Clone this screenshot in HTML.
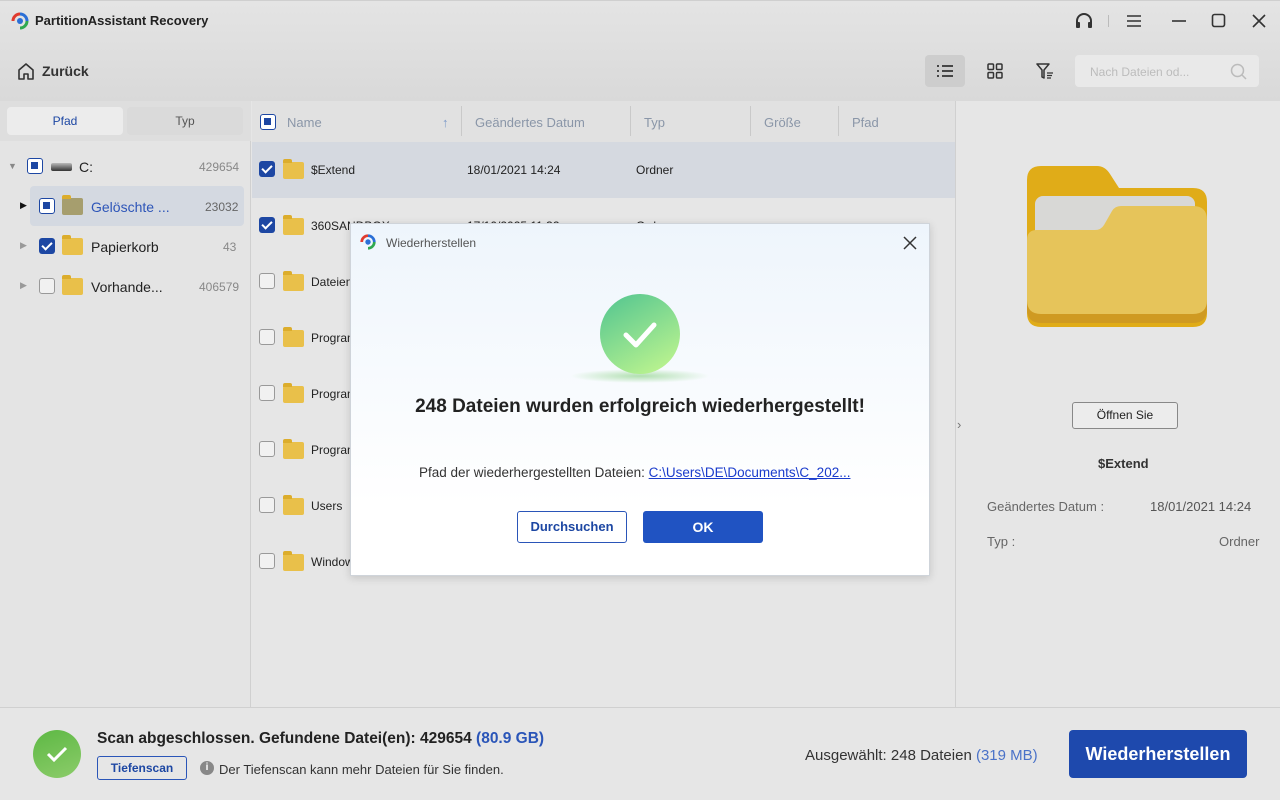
<!DOCTYPE html>
<html><head><meta charset="utf-8"><style>
*{box-sizing:border-box;margin:0;padding:0}
body{width:1280px;height:800px;overflow:hidden;background:#e6e6e6;font-family:"Liberation Sans",sans-serif;color:#222;position:relative;font-size:13px}
.abs{position:absolute}
.top{left:0;top:0;width:1280px;height:101px;background:linear-gradient(#e4e4e4,#d9d9d9);border-top:1px solid #cfcfcf}
.cb{position:absolute;width:16px;height:16px;border-radius:3px}
.cb.on{background:#1d47a3}
.cb.on::after{content:"";position:absolute;left:5px;top:2px;width:4px;height:8px;border:solid #fff;border-width:0 2px 2px 0;transform:rotate(45deg)}
.cb.part{border:1.5px solid #1d47a3;background:#fff}
.cb.part::after{content:"";position:absolute;left:3px;top:3px;width:7px;height:7px;background:#1d47a3}
.cb.off{border:1.3px solid #999;background:#f1f1f1}
.fold{position:absolute;width:21px;height:17px;background:#e9c04a;border-radius:2px}
.fold::before{content:"";position:absolute;left:0;top:-3px;width:9px;height:4px;background:#dcad2c;border-radius:2px 2px 0 0}
.row{position:absolute;left:252px;width:703px;height:56px}
.row span{position:absolute;top:21px;font-size:12px}
.hd{position:absolute;top:115px;font-size:13px;color:#8a96a8}
.sep{position:absolute;top:106px;width:1px;height:30px;background:#c9c9c9}
</style></head><body>
<div class="abs top"></div>
<svg class="abs" style="left:10px;top:11px" width="20" height="20" viewBox="0 0 20 20"><path d="M3 10a7 7 0 0 1 7-7" stroke="#e03b2f" stroke-width="3" fill="none"/><path d="M10 3a7 7 0 0 1 7 7" stroke="#2b6fd6" stroke-width="3" fill="none"/><path d="M17 10a7 7 0 0 1-7 7" stroke="#2fa84f" stroke-width="3" fill="none"/><circle cx="10" cy="10" r="3" fill="#2b6fd6"/></svg>
<div class="abs" style="left:35px;top:13px;font-size:13px;font-weight:bold;color:#222">PartitionAssistant Recovery</div>
<svg class="abs" style="left:1074px;top:12px" width="20" height="18" viewBox="0 0 20 18"><path d="M3 12V9a7 7 0 0 1 14 0v3" stroke="#333" stroke-width="2" fill="none"/><rect x="2" y="10" width="4" height="6" rx="1" fill="#333"/><rect x="14" y="10" width="4" height="6" rx="1" fill="#333"/></svg>
<div class="abs" style="left:1108px;top:15px;width:1px;height:12px;background:#bbb"></div>
<svg class="abs" style="left:1126px;top:14px" width="16" height="14"><path d="M1 2h14M1 7h14M1 12h14" stroke="#333" stroke-width="1.6"/></svg>
<svg class="abs" style="left:1171px;top:14px" width="16" height="14"><path d="M1 7h14" stroke="#333" stroke-width="1.6"/></svg>
<svg class="abs" style="left:1211px;top:13px" width="16" height="16"><rect x="1.5" y="1.5" width="12" height="12" rx="2" stroke="#333" stroke-width="1.6" fill="none"/></svg>
<svg class="abs" style="left:1251px;top:13px" width="16" height="16"><path d="M2 2l12 12M14 2L2 14" stroke="#333" stroke-width="1.6"/></svg>
<svg class="abs" style="left:16px;top:62px" width="20" height="18" viewBox="0 0 20 18"><path d="M3 17V8l7-6 7 6v9h-5v-5H8v5z" stroke="#333" stroke-width="1.6" fill="none" stroke-linejoin="round"/></svg>
<div class="abs" style="left:42px;top:63px;font-size:14px;font-weight:bold;color:#333">Zurück</div>
<div class="abs" style="left:925px;top:55px;width:40px;height:32px;background:#cdcdcd;border-radius:4px"></div>
<svg class="abs" style="left:936px;top:64px" width="18" height="14"><path d="M1 2h2M6 2h11M1 7h2M6 7h11M1 12h2M6 12h11" stroke="#333" stroke-width="1.8"/></svg>
<svg class="abs" style="left:987px;top:63px" width="16" height="16"><rect x="1" y="1" width="5.5" height="5.5" rx="1" stroke="#333" stroke-width="1.5" fill="none"/><rect x="9.5" y="1" width="5.5" height="5.5" rx="1" stroke="#333" stroke-width="1.5" fill="none"/><rect x="1" y="9.5" width="5.5" height="5.5" rx="1" stroke="#333" stroke-width="1.5" fill="none"/><rect x="9.5" y="9.5" width="5.5" height="5.5" rx="1" stroke="#333" stroke-width="1.5" fill="none"/></svg>
<svg class="abs" style="left:1036px;top:62px" width="18" height="18"><path d="M1 2h12l-5 6v8l-2-1V8z" stroke="#333" stroke-width="1.5" fill="none" stroke-linejoin="round"/><path d="M11 11h6M11 13.5h5M11 16h4" stroke="#333" stroke-width="1.3"/></svg>
<div class="abs" style="left:1075px;top:55px;width:184px;height:32px;background:#e9e9e9;border-radius:4px"></div>
<div class="abs" style="left:1090px;top:65px;font-size:12px;color:#bcbcbc">Nach Dateien od...</div>
<svg class="abs" style="left:1230px;top:63px" width="18" height="18"><circle cx="7.5" cy="7.5" r="6" stroke="#bbb" stroke-width="1.5" fill="none"/><path d="M12 12l4 4" stroke="#bbb" stroke-width="1.5"/></svg>
<div class="abs" style="left:0;top:101px;width:251px;height:607px;background:#e4e4e4;border-right:1px solid #d0d0d0"></div>
<div class="abs" style="left:0;top:101px;width:251px;height:40px;background:#dedede"></div>
<div class="abs" style="left:7px;top:107px;width:116px;height:28px;background:#ececec;border-radius:4px;text-align:center;line-height:28px;font-size:12px;color:#1d47a3">Pfad</div>
<div class="abs" style="left:127px;top:107px;width:116px;height:28px;background:#dadada;border-radius:4px;text-align:center;line-height:28px;font-size:12px;color:#555">Typ</div>
<div class="abs" style="left:8px;top:161px;font-size:9px;color:#888">▼</div>
<div class="cb part" style="left:27px;top:158px"></div>
<div class="abs" style="left:51px;top:163px;width:21px;height:8px;background:linear-gradient(#bbb,#333);border-radius:2px"></div>
<div class="abs" style="left:79px;top:159px;font-size:14px;color:#222">C:</div>
<div class="abs" style="left:199px;top:160px;font-size:12px;color:#888">429654</div>
<div class="abs" style="left:30px;top:186px;width:214px;height:40px;background:#d4d9e1;border-radius:4px"></div>
<div class="abs" style="left:20px;top:200px;font-size:9px;color:#111">▶</div>
<div class="cb part" style="left:39px;top:198px"></div>
<div class="fold" style="left:62px;top:198px;background:#a69e6e"></div>
<div class="abs" style="left:91px;top:199px;font-size:14px;color:#2d55b8">Gelöschte ...</div>
<div class="abs" style="left:205px;top:200px;font-size:12px;color:#666">23032</div>
<div class="abs" style="left:20px;top:240px;font-size:9px;color:#999">▶</div>
<div class="cb on" style="left:39px;top:238px"></div>
<div class="fold" style="left:62px;top:238px"></div>
<div class="abs" style="left:91px;top:239px;font-size:14px;color:#222">Papierkorb</div>
<div class="abs" style="left:223px;top:240px;font-size:12px;color:#888">43</div>
<div class="abs" style="left:20px;top:280px;font-size:9px;color:#999">▶</div>
<div class="cb off" style="left:39px;top:278px"></div>
<div class="fold" style="left:62px;top:278px"></div>
<div class="abs" style="left:91px;top:279px;font-size:14px;color:#222">Vorhande...</div>
<div class="abs" style="left:199px;top:280px;font-size:12px;color:#888">406579</div>
<div class="abs" style="left:252px;top:101px;width:703px;height:41px;background:#e1e1e1"></div>
<div class="cb part" style="left:260px;top:114px"></div>
<div class="hd" style="left:287px">Name</div>
<div class="hd" style="left:442px;color:#7d9ac8">↑</div>
<div class="sep" style="left:461px"></div>
<div class="hd" style="left:475px">Geändertes Datum</div>
<div class="sep" style="left:630px"></div>
<div class="hd" style="left:644px">Typ</div>
<div class="sep" style="left:750px"></div>
<div class="hd" style="left:764px">Größe</div>
<div class="sep" style="left:838px"></div>
<div class="hd" style="left:852px">Pfad</div>
<div class="row" style="top:142px;background:#d5d9e0"><div class="cb on" style="left:7px;top:19px"></div><div class="fold" style="left:31px;top:20px"></div><span style="left:59px">$Extend</span><span style="left:215px">18/01/2021 14:24</span><span style="left:384px">Ordner</span></div>
<div class="row" style="top:198px"><div class="cb on" style="left:7px;top:19px"></div><div class="fold" style="left:31px;top:20px"></div><span style="left:59px">360SANDBOX</span><span style="left:215px">17/10/2025 11:32</span><span style="left:384px">Ordner</span></div>
<div class="row" style="top:254px"><div class="cb off" style="left:7px;top:19px"></div><div class="fold" style="left:31px;top:20px"></div><span style="left:59px">Dateien</span></div>
<div class="row" style="top:310px"><div class="cb off" style="left:7px;top:19px"></div><div class="fold" style="left:31px;top:20px"></div><span style="left:59px">Program</span></div>
<div class="row" style="top:366px"><div class="cb off" style="left:7px;top:19px"></div><div class="fold" style="left:31px;top:20px"></div><span style="left:59px">Program</span></div>
<div class="row" style="top:422px"><div class="cb off" style="left:7px;top:19px"></div><div class="fold" style="left:31px;top:20px"></div><span style="left:59px">Program</span></div>
<div class="row" style="top:478px"><div class="cb off" style="left:7px;top:19px"></div><div class="fold" style="left:31px;top:20px"></div><span style="left:59px">Users</span></div>
<div class="row" style="top:534px"><div class="cb off" style="left:7px;top:19px"></div><div class="fold" style="left:31px;top:20px"></div><span style="left:59px">Windows</span></div>
<div class="abs" style="left:955px;top:101px;width:1px;height:607px;background:#d0d0d0"></div>
<div class="abs" style="left:957px;top:417px;font-size:13px;color:#777">›</div>
<svg class="abs" style="left:1027px;top:166px" width="180" height="161" viewBox="0 0 180 161"><path d="M0 14Q0 0 14 0h56q8 0 13 8l9 14h74q14 0 14 14v111q0 14-14 14H14Q0 161 0 147z" fill="#e0ac18"/><rect x="8" y="30" width="160" height="60" rx="8" fill="#d8d8d6"/><path d="M0 76q0-10 10-10h58q6 0 9-5l8-14q3-5 9-5h72q14 0 14 14v87q0 14-14 14H14Q0 157 0 143z" fill="#cf9a22"/><path d="M0 74q0-10 10-10h58q6 0 9-5l8-14q3-5 9-5h72q14 0 14 14v80q0 14-14 14H14Q0 148 0 134z" fill="#e6c45a"/></svg>
<div class="abs" style="left:1072px;top:402px;width:106px;height:27px;border:1px solid #888;border-radius:3px;text-align:center;line-height:25px;font-size:12px;color:#222;background:#ececec">Öffnen Sie</div>
<div class="abs" style="left:1098px;top:456px;font-size:13px;font-weight:bold;color:#333">$Extend</div>
<div class="abs" style="left:987px;top:499px;font-size:13px;color:#666">Geändertes Datum :</div>
<div class="abs" style="left:1150px;top:499px;font-size:13px;color:#555">18/01/2021 14:24</div>
<div class="abs" style="left:987px;top:534px;font-size:13px;color:#666">Typ :</div>
<div class="abs" style="left:1219px;top:534px;font-size:13px;color:#666">Ordner</div>
<div class="abs" style="left:0;top:707px;width:1280px;height:93px;background:#e6e6e6;border-top:1px solid #d0d0d0"></div>
<div class="abs" style="left:33px;top:730px;width:48px;height:48px;border-radius:50%;background:linear-gradient(160deg,#5db844,#8ccc6a)"></div>
<svg class="abs" style="left:44px;top:742px" width="26" height="24"><path d="M4 12l6 6 12-12" stroke="#fff" stroke-width="3" fill="none"/></svg>
<div class="abs" style="left:97px;top:730px;font-size:15.5px;font-weight:bold;color:#222">Scan abgeschlossen. Gefundene Datei(en): 429654 <span style="color:#2a55b8">(80.9 GB)</span></div>
<div class="abs" style="left:97px;top:756px;width:90px;height:24px;border:1px solid #2a55b8;border-radius:3px;text-align:center;line-height:22px;font-size:12px;font-weight:bold;color:#1d47a3">Tiefenscan</div>
<div class="abs" style="left:200px;top:761px;width:14px;height:14px;border-radius:50%;background:#888;color:#fff;font-size:10px;font-weight:bold;text-align:center;line-height:14px">i</div>
<div class="abs" style="left:219px;top:762px;font-size:13px;color:#333">Der Tiefenscan kann mehr Dateien für Sie finden.</div>
<div class="abs" style="left:805px;top:747px;font-size:15px;color:#333">Ausgewählt: 248 Dateien <span style="color:#4a72c8">(319 MB)</span></div>
<div class="abs" style="left:1069px;top:730px;width:178px;height:48px;background:#1e49ad;border-radius:4px;color:#fff;font-size:18px;font-weight:bold;text-align:center;line-height:48px">Wiederherstellen</div>
<div class="abs" style="left:350px;top:223px;width:580px;height:353px;background:linear-gradient(#eef5fc,#fff 80%);border:1px solid #cfd4da;box-shadow:0 2px 8px rgba(0,0,0,.15)"></div>
<svg class="abs" style="left:359px;top:233px" width="18" height="18" viewBox="0 0 20 20"><path d="M3 10a7 7 0 0 1 7-7" stroke="#e03b2f" stroke-width="3" fill="none"/><path d="M10 3a7 7 0 0 1 7 7" stroke="#2b6fd6" stroke-width="3" fill="none"/><path d="M17 10a7 7 0 0 1-7 7" stroke="#2fa84f" stroke-width="3" fill="none"/><circle cx="10" cy="10" r="3" fill="#2b6fd6"/></svg>
<div class="abs" style="left:386px;top:236px;font-size:12px;color:#555">Wiederherstellen</div>
<svg class="abs" style="left:902px;top:235px" width="16" height="16"><path d="M2 2l12 12M14 2L2 14" stroke="#333" stroke-width="1.5"/></svg>
<div class="abs" style="left:570px;top:369px;width:140px;height:14px;border-radius:50%;background:radial-gradient(rgba(90,190,80,.45),rgba(90,190,80,0) 70%)"></div>
<div class="abs" style="left:600px;top:294px;width:80px;height:80px;border-radius:50%;background:linear-gradient(150deg,#50c490,#c6f88f)"></div>
<svg class="abs" style="left:618px;top:315px" width="44" height="40"><path d="M8 20l10 10L36 10" stroke="#fff" stroke-width="5" fill="none" stroke-linecap="round" stroke-linejoin="round"/></svg>
<div class="abs" style="left:350px;top:396px;width:580px;text-align:center;font-size:19px;font-weight:bold;color:#222">248 Dateien wurden erfolgreich wiederhergestellt!</div>
<div class="abs" style="left:419px;top:465px;font-size:13.5px;color:#333">Pfad der wiederhergestellten Dateien: <span style="color:#1a3ccc;text-decoration:underline">C:\Users\DE\Documents\C_202...</span></div>
<div class="abs" style="left:517px;top:511px;width:110px;height:32px;border:1px solid #2a55b8;border-radius:3px;background:#fff;text-align:center;line-height:30px;font-size:13px;font-weight:bold;color:#1d47a3">Durchsuchen</div>
<div class="abs" style="left:643px;top:511px;width:120px;height:32px;background:#2053c2;border-radius:3px;text-align:center;line-height:32px;font-size:14px;font-weight:bold;color:#fff">OK</div>
</body></html>
